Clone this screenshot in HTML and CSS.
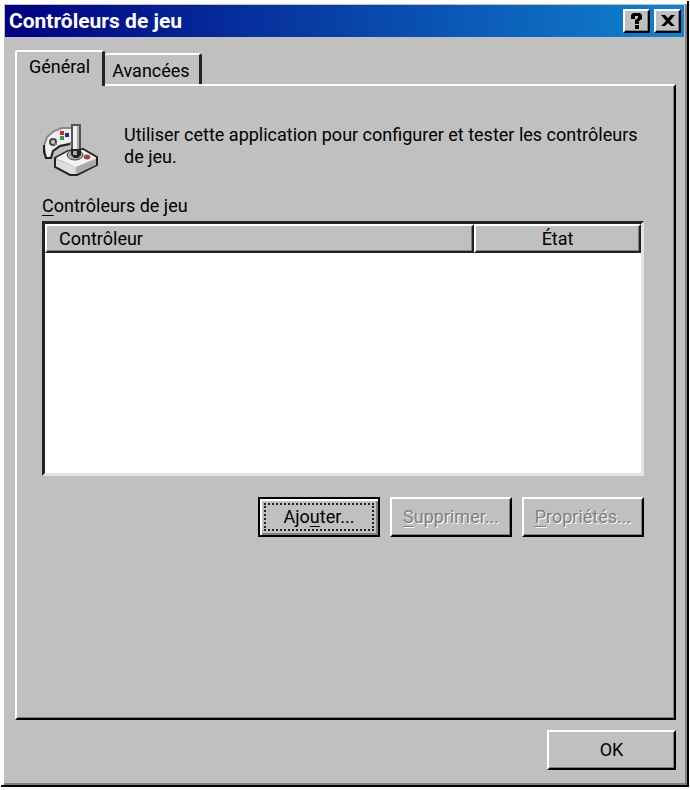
FILE: index.html
```html
<!DOCTYPE html>
<html lang="fr">
<head>
<meta charset="utf-8">
<title>Contrôleurs de jeu</title>
<link rel="stylesheet" href="styles.css">
</head>
<body>
<main class="window">
  <header class="titlebar">
    <h1>Contrôleurs de jeu</h1>
    <div class="caption-buttons">
      <button class="caption" type="button" aria-label="Aide">
        <svg viewBox="0 0 16 16" width="16" height="16"><path d="M4 0h7l2 2v4l-3 2v3H6V7l3-2V3H6v3H2V2zM6 12h4v4H6z"/></svg>
      </button>
      <button class="caption" type="button" aria-label="Fermer">
        <svg viewBox="0 0 16 16" width="16" height="16"><path d="M1 2h4l3 3 3-3h4l-5 6 5 5h-4l-3-3-3 3H1l5-5z"/></svg>
      </button>
    </div>
  </header>
  <div class="content">
    <div class="tabs" role="tablist">
      <button class="tab selected" type="button" role="tab" aria-selected="true">Général</button>
      <button class="tab" type="button" role="tab" aria-selected="false">Avancées</button>
    </div>
    <section class="panel" role="tabpanel">
      <div class="intro">
        <svg class="device" viewBox="0 0 58 56" width="58" height="56" aria-hidden="true">
          <path d="M2 24 5 15l7-6 8-3h9l4 4v8l-6 4-9 2-7 5-2 7H4l-1-6z" fill="#eee" stroke="#888" stroke-width="2"/>
          <path d="M2 23v7l2 6h5l2-7 7-5 10-2" fill="none" stroke="#222" stroke-width="2"/>
          <circle cx="11" cy="20" r="3" fill="#ccc" stroke="#444" stroke-width="2"/>
          <path d="M12 21h3v2h-3z" fill="#a66"/>
          <path d="M18 9h4v4h-4z" fill="#d22"/><path d="M23 11h4v4h-4z" fill="#22a"/><path d="M18 14h4v4h-4z" fill="#1a5"/>
          <path d="m13 36 13-7 15-2 14 8v8L35 53h-7L13 45z" fill="#c8c8c8" stroke="#222" stroke-width="2"/>
          <path d="m14 36 13-7 14-1 13 8-20 9z" fill="#f2f2f2"/>
          <path d="m14 38 19 7v7h-4l-15-8z" fill="#ddd"/><path d="m34 45 20-8v6l-19 9z" fill="#aaa"/>
          <ellipse cx="33" cy="33" rx="8" ry="5" fill="#aaa" stroke="#444"/>
          <path d="M30 3h8v29h-8z" fill="#eee" stroke="#555" stroke-width="2"/>
          <path d="M35 4h2v24h-2z" fill="#aaa"/><path d="M29 27h10v6l-3 3h-4l-3-3z" fill="#222"/><path d="M31 29h4v4h-4z" fill="#aaa"/>
          <ellipse cx="45" cy="35" rx="3" ry="2" fill="#c33" stroke="#844"/>
        </svg>
        <p>Utiliser cette application pour configurer et tester les contrôleurs de jeu.</p>
      </div>
      <h2 id="list-label"><u>C</u>ontrôleurs de jeu</h2>
      <div class="list">
        <table aria-labelledby="list-label">
          <thead><tr><th class="name">Contrôleur</th><th class="state">État</th></tr></thead>
          <tbody></tbody>
        </table>
      </div>
      <div class="actions">
        <button class="push default" type="button"><span>Ajo<u>u</u>ter...</span></button>
        <button class="push" type="button" disabled><u>S</u>upprimer...</button>
        <button class="push" type="button" disabled><u>P</u>ropriétés...</button>
      </div>
    </section>
    <footer><button class="push ok" type="button">OK</button></footer>
  </div>
</main>
</body>
</html>
```
FILE: styles.css
```css
* { box-sizing: border-box; }
body {
  margin: 0;
  padding: 1px 1px 3px 1px;
  height: 100vh;
  background: #fff;
  color: #000;
  font: 18px/22px Roboto, sans-serif;
}
button { font: inherit; color: inherit; border-radius: 0; }
h1, h2, p { margin: 0; }
u { text-underline-offset: 3px; }
.window {
  height: 100%;
  display: flex;
  flex-direction: column;
  background: #c0c0c0;
  padding: 1px;
  border-right: 2px solid #000;
  border-bottom: 2px solid #000;
  box-shadow: inset 3px 3px #fff, inset -2px -2px #808080;
}
.titlebar {
  height: 32px;
  margin: 3px 2px 0 3px;
  padding: 0 3px 0 4px;
  display: flex;
  align-items: center;
  justify-content: space-between;
  background: linear-gradient(90deg, #000080, #1084d0);
  color: #fff;
}
h1 { font-size: 21px; font-weight: 700; }
.caption-buttons { display: flex; gap: 4px; }
.caption {
  width: 27px;
  height: 24px;
  padding: 0;
  display: grid;
  place-items: center;
  background: #c0c0c0;
  border: 2px solid;
  border-color: #fff #000 #000 #fff;
  box-shadow: inset -1px -1px #808080;
}
.content {
  flex: 1;
  display: flex;
  flex-direction: column;
  padding: 13px 10px 14px 13px;
}
.tabs { display: flex; align-items: flex-end; height: 34px; }
.tab {
  height: 31px;
  padding: 2px 9px 0 7px;
  background: #c0c0c0;
  border: solid;
  border-width: 2px 3px 0 0;
  border-color: #fff #222 #fff #fff;
  border-radius: 3px 3px 0 0;
}
.tab.selected {
  height: 36px;
  margin-bottom: -2px;
  padding: 0 12px 4px 12px;
  border-left-width: 2px;
  position: relative;
}
.panel {
  flex: 1;
  padding: 36px 30px 0 25px;
  border: 2px solid;
  border-color: #fff #000 #000 #fff;
  box-shadow: inset -1px -1px #808080;
}
.intro { display: flex; gap: 24px; align-items: flex-start; }
.device { flex: none; }
.intro p { padding-top: 2px; }
h2 { margin-top: 17px; font-size: inherit; font-weight: 400; }
.list {
  height: 255px;
  margin-top: 4px;
  background: #fff;
  border: 3px solid;
  border-color: #222 #e4e4e4 #e4e4e4 #222;
}
table { width: 100%; border-collapse: separate; border-spacing: 0; }
th {
  height: 29px;
  padding: 0 12px;
  background: #c0c0c0;
  border: 2px solid;
  border-color: #fff #222 #222 #fff;
  box-shadow: inset -1px -1px #808080;
  font-weight: 400;
  text-align: left;
}
.name { width: 72%; }
.state { text-align: center; }
.actions { display: flex; justify-content: flex-end; gap: 10px; margin-top: 21px; }
.push {
  width: 122px;
  height: 40px;
  padding: 0;
  background: #c0c0c0;
  border: 2px solid;
  border-color: #fff #000 #000 #fff;
  box-shadow: inset -1px -1px #808080;
}
.push:disabled { color: #808080; text-shadow: 1px 1px #fff; }
.default {
  border-color: #000;
  box-shadow: inset 2px 2px #fff, inset -2px -2px #808080;
}
.default span {
  display: block;
  height: 28px;
  margin: 0 4px;
  line-height: 24px;
  border: 2px dotted #222;
}
footer { display: flex; justify-content: flex-end; margin-top: 10px; }
.ok { width: 129px; }
```
